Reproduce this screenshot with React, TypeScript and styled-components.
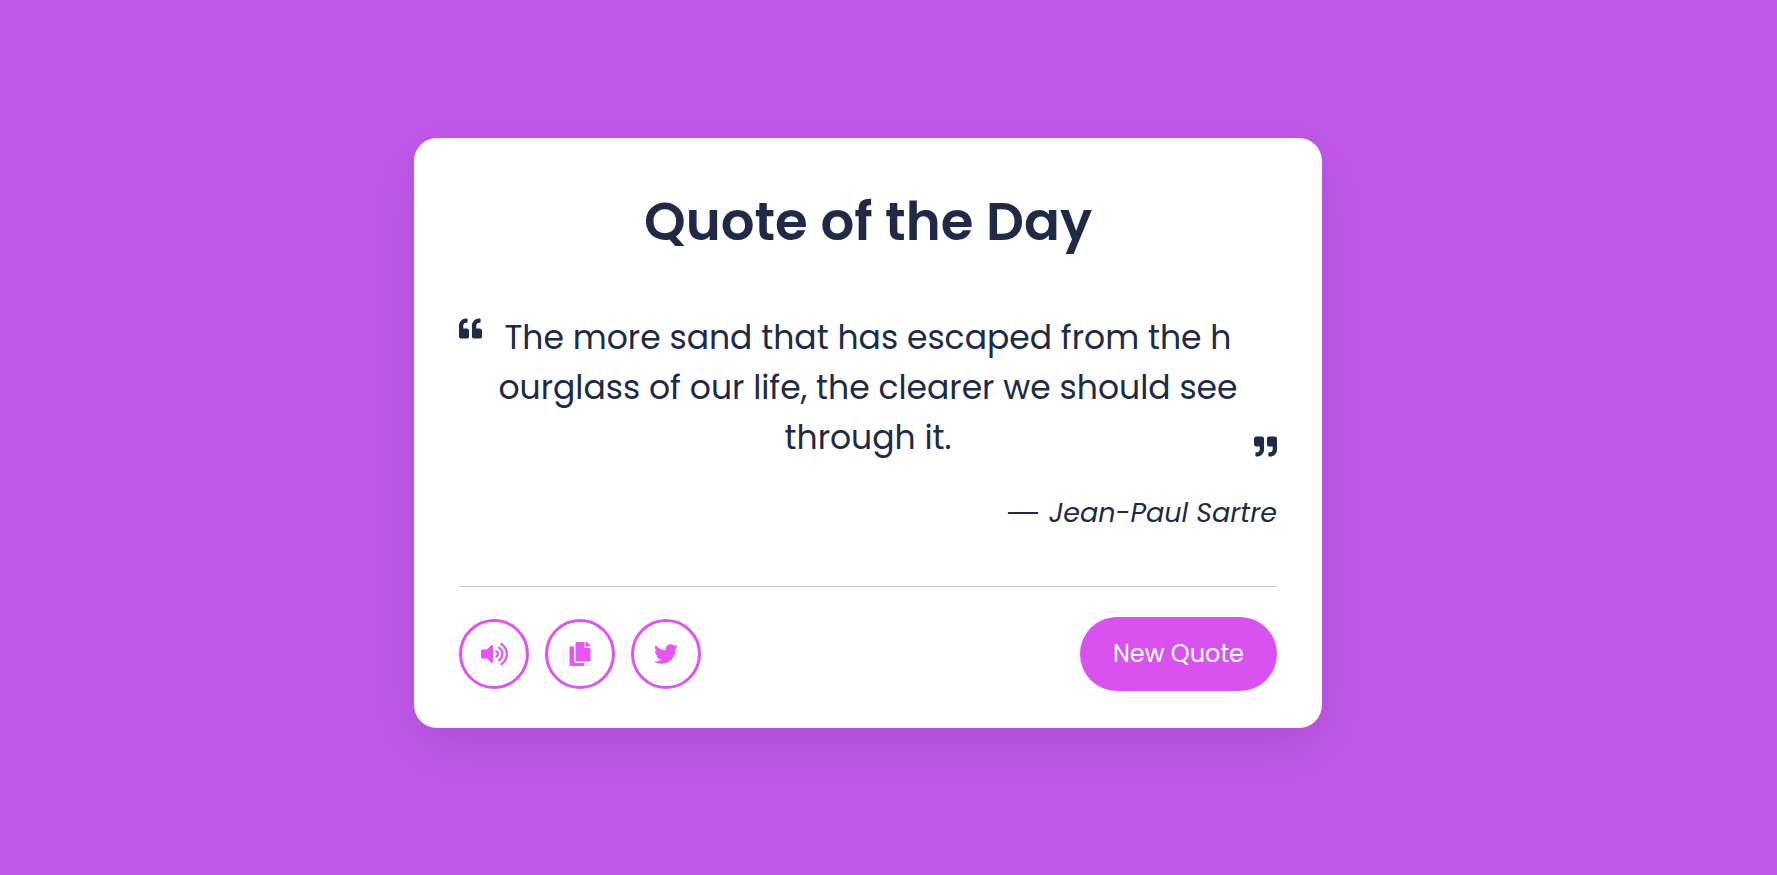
import React from "react";
import styled, { createGlobalStyle } from "styled-components";
import { FaCopy, FaQuoteLeft, FaQuoteRight, FaTwitter, FaVolumeUp } from "react-icons/fa";

const GlobalStyle = createGlobalStyle`
  *, *::before, *::after { box-sizing: border-box; }
  body {
    margin: 0;
    background: #c158eb;
    color: #202945;
    font-family: Poppins, Inter, "Open Sans", sans-serif;
  }
`;

const Page = styled.main`
  display: flex;
  align-items: center;
  justify-content: center;
  min-height: 100vh;
  padding: 0 41px 9px 0;
`;

const Card = styled.article`
  width: 100%;
  max-width: 908px;
  padding: 45px 45px 37px;
  border-radius: 23px;
  background: #fff;
  box-shadow: 0 18px 60px rgba(0, 0, 0, 0.11);
`;

const Title = styled.h1`
  margin: 0 0 51px;
  font-size: 53px;
  font-weight: 600;
  line-height: 78px;
  text-align: center;
`;

const QuoteRow = styled.blockquote`
  display: flex;
  justify-content: space-between;
  margin: 0;
  font-size: 33px;
  line-height: 50px;
`;

const QuoteMark = styled.span<{ $end?: boolean }>`
  display: flex;
  align-self: ${({ $end }) => ($end ? "flex-end" : "flex-start")};
  padding: ${({ $end }) => ($end ? "0 0 5px" : "5px 0 0")};
  font-size: 23px;
`;

const QuoteText = styled.p`
  margin: 0;
  padding-top: 1px;
  text-align: center;
`;

const Author = styled.p`
  display: flex;
  justify-content: flex-end;
  gap: 11px;
  margin: 30px 0 53px;
  font-size: 27px;
  font-style: italic;
  line-height: 40px;
`;

const Dash = styled.span`
  font-family: "Liberation Sans", sans-serif;
  font-size: 30px;
  font-style: normal;
  line-height: 36px;
`;

const Footer = styled.footer`
  display: flex;
  align-items: center;
  justify-content: space-between;
  padding-top: 30px;
  border-top: 1px solid #c8c8c8;
`;

const Actions = styled.div`
  display: flex;
  gap: 16px;
`;

const IconButton = styled.button`
  display: flex;
  align-items: center;
  justify-content: center;
  width: 70px;
  height: 70px;
  padding: 0;
  border: 3px solid #df53f0;
  border-radius: 50%;
  background: transparent;
  color: #e855f5;
  font-size: 24px;
  cursor: pointer;
`;

const VolumeIcon = styled(FaVolumeUp)`
  width: 27px;
`;

const NewQuoteButton = styled.button`
  height: 74px;
  padding: 0 33px 2px;
  border: 0;
  border-radius: 37px;
  background: #d952f0;
  color: #fff;
  font-family: inherit;
  font-size: 24px;
  cursor: pointer;
`;

export default function App() {
  return (
    <>
      <GlobalStyle />
      <Page>
        <Card>
          <Title>Quote of the Day</Title>
          <QuoteRow>
            <QuoteMark><FaQuoteLeft /></QuoteMark>
            <QuoteText>
              The more sand that has escaped from the h<br />
              ourglass of our life, the clearer we should see<br />
              through it.
            </QuoteText>
            <QuoteMark $end><FaQuoteRight /></QuoteMark>
          </QuoteRow>
          <Author>
            <Dash>—</Dash>
            <span>Jean-Paul Sartre</span>
          </Author>
          <Footer>
            <Actions>
              <IconButton type="button" aria-label="Listen"><VolumeIcon /></IconButton>
              <IconButton type="button" aria-label="Copy"><FaCopy /></IconButton>
              <IconButton type="button" aria-label="Share on Twitter"><FaTwitter /></IconButton>
            </Actions>
            <NewQuoteButton type="button">New Quote</NewQuoteButton>
          </Footer>
        </Card>
      </Page>
    </>
  );
}
